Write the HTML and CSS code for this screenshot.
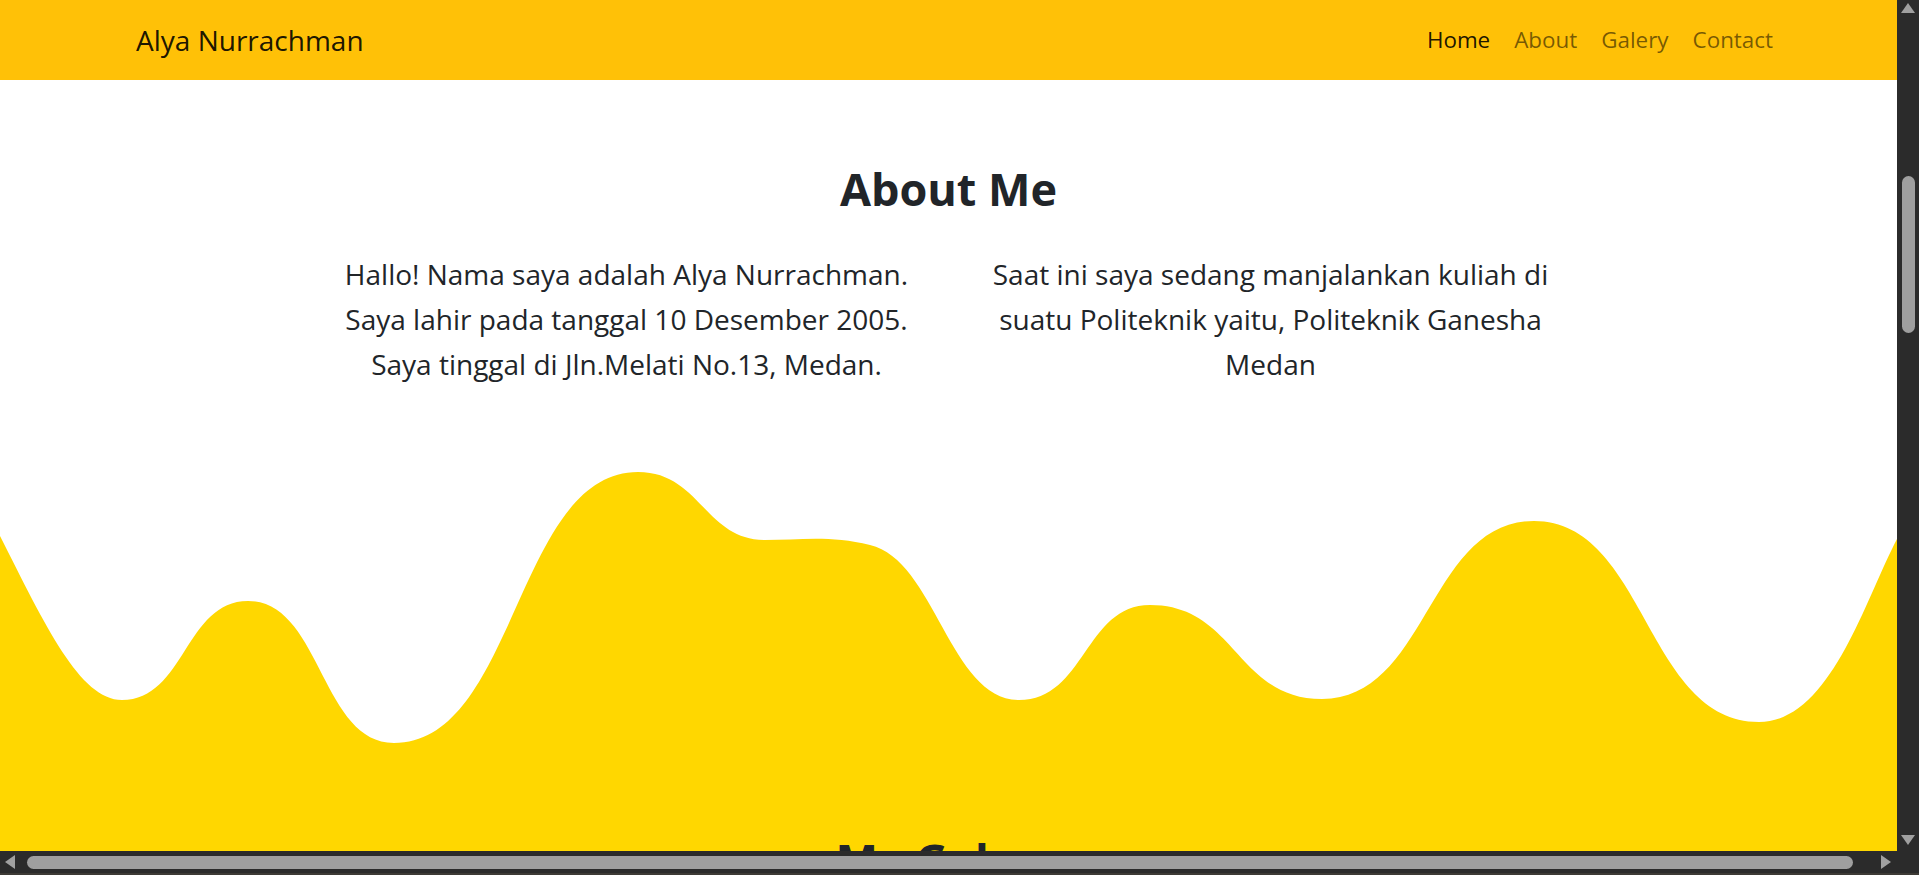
FILE: index.html
```html
<!DOCTYPE html>
<html lang="id">
<head>
<meta charset="utf-8">
<title>Alya Nurrachman</title>
<link rel="stylesheet" href="styles.css">
</head>
<body>
<div class="window">
  <div class="viewport">
    <nav class="navbar">
      <div class="nav-inner">
        <a class="brand" href="#">Alya Nurrachman</a>
        <ul class="nav-links">
          <li><a class="nav-link active" href="#">Home</a></li>
          <li><a class="nav-link" href="#about">About</a></li>
          <li><a class="nav-link" href="#galery">Galery</a></li>
          <li><a class="nav-link" href="#contact">Contact</a></li>
        </ul>
      </div>
    </nav>

    <section class="about" id="about">
      <h2 class="section-title">About Me</h2>
      <div class="about-row">
        <p class="about-col">Hallo! Nama saya adalah Alya Nurrachman. Saya lahir pada tanggal 10 Desember 2005. Saya tinggal di Jln.Melati No.13, Medan.</p>
        <p class="about-col">Saat ini saya sedang manjalankan kuliah di suatu Politeknik yaitu, Politeknik Ganesha Medan</p>
      </div>
    </section>

    <svg class="wave" viewBox="0 460 1897 300" preserveAspectRatio="none" xmlns="http://www.w3.org/2000/svg">
      <path fill="#ffd700" d="M0,536 C45,625 80,700 122,700 C185,700 185,601 248,601 C321,601 321,743 394,743 C516,743 516,472 638,472 C700,472 705,540 765,540 C800,540 830,535 870,545 C935,560 950,700 1019,700 C1085,700 1085,605 1150,605 C1236,605 1236,699 1322,699 C1428,699 1428,521 1534,521 C1646,521 1646,722 1759,722 C1830,722 1865,600 1897,539 L1897,760 L0,760 Z"/>
    </svg>

    <section class="gallery" id="galery">
      <h2 class="section-title">My Galery</h2>
    </section>
  </div>

  <div class="vscroll">
    <svg class="arrow" viewBox="0 0 14 10"><polygon points="7,0 14,10 0,10"/></svg>
    <div class="vtrack"><div class="vthumb"></div></div>
    <svg class="arrow" viewBox="0 0 14 10"><polygon points="0,0 14,0 7,10"/></svg>
  </div>

  <div class="hscroll">
    <svg class="harrow" viewBox="0 0 10 14"><polygon points="10,0 10,14 0,7"/></svg>
    <div class="htrack"><div class="hthumb"></div></div>
    <svg class="harrow" viewBox="0 0 10 14"><polygon points="0,0 10,7 0,14"/></svg>
  </div>

  <div class="corner"></div>
</div>
</body>
</html>
```

FILE: styles.css
```css
html, body {
  margin: 0;
  padding: 0;
  height: 100%;
  overflow: hidden;
}

body {
  font-family: "Open Sans", "Noto Sans", sans-serif;
  color: #212529;
  background: #2b2b2b;
}

.window {
  display: grid;
  grid-template-columns: 1fr 22px;
  grid-template-rows: 851px 24px;
  width: 1919px;
  height: 875px;
}

.viewport {
  overflow: hidden;
  background: #ffffff;
}

/* Navbar */
.navbar {
  height: 80px;
  background: #ffc107;
  display: flex;
  align-items: center;
}

.nav-inner {
  width: 100%;
  box-sizing: border-box;
  padding: 0 112px 0 136px;
  display: flex;
  align-items: center;
  justify-content: space-between;
}

.brand {
  font-size: 28px;
  color: rgba(0, 0, 0, 0.9);
  text-decoration: none;
  line-height: 1.5;
}

.nav-links {
  display: flex;
  list-style: none;
  margin: 0;
  padding: 0;
}

.nav-link {
  display: block;
  padding: 8px 12px;
  font-size: 22.4px;
  line-height: 1.5;
  color: rgba(0, 0, 0, 0.55);
  text-decoration: none;
}

.nav-link.active {
  color: rgba(0, 0, 0, 0.9);
}

/* About */
.about {
  padding: 82px 0 73px;
  text-align: center;
}

.section-title {
  margin: 0;
  font-size: 45px;
  font-weight: 700;
  line-height: 54px;
  color: #212529;
  text-align: center;
}

.about .section-title {
  margin-bottom: 36px;
}

.about-row {
  display: flex;
  justify-content: center;
  gap: 36px;
}

.about-col {
  width: 608px;
  margin: 0;
  font-size: 28px;
  line-height: 45px;
  text-align: center;
}

/* Wave + gallery */
.wave {
  display: block;
  width: 100%;
  height: 300px;
}

.gallery {
  background: #ffd700;
  padding-top: 73px;
  height: 300px;
}

/* Fake window scrollbars */
.vscroll {
  background: #2b2b2b;
  display: flex;
  flex-direction: column;
  align-items: center;
  padding: 3px 0 6px;
  box-sizing: border-box;
}

.arrow {
  width: 14px;
  height: 10px;
  fill: #a0a0a0;
  flex: none;
}

.vtrack {
  flex: 1;
  width: 100%;
  display: flex;
  flex-direction: column;
  align-items: center;
}

.vthumb {
  width: 13px;
  height: 157px;
  margin-top: 163px;
  margin-left: 1px;
  border-radius: 7px;
  background: #9f9f9f;
}

.hscroll {
  background: #2b2b2b;
  border-bottom: 2px solid #3d3a35;
  display: flex;
  align-items: center;
  padding: 0 6px 0 5px;
  box-sizing: border-box;
}

.harrow {
  width: 10px;
  height: 14px;
  fill: #a0a0a0;
  flex: none;
}

.htrack {
  flex: 1;
  display: flex;
  align-items: center;
  padding: 0 28px 0 12px;
}

.hthumb {
  flex: 1;
  height: 13px;
  border-radius: 7px;
  background: #9f9f9f;
}

.corner {
  background: #2b2b2b;
  border-bottom: 2px solid #3d3a35;
}
```
